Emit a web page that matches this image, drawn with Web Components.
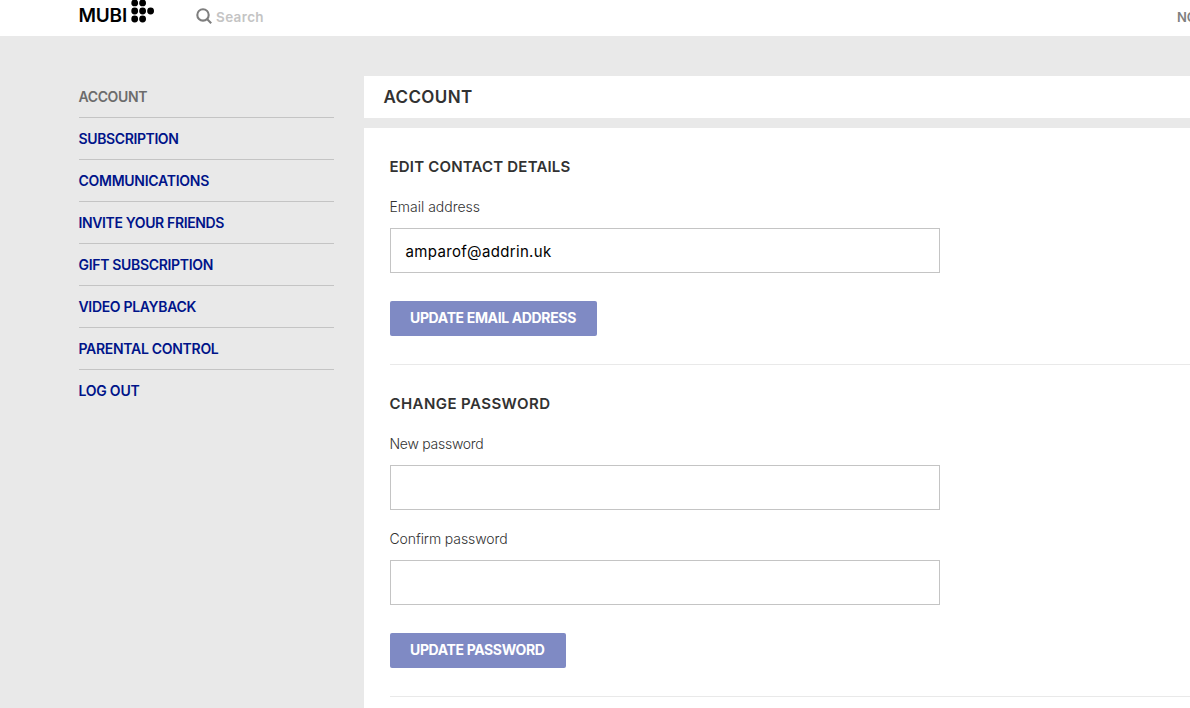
<!DOCTYPE html>
<html lang="en"><head><meta charset="utf-8"><title>MUBI – Account</title>
<style>
html,body{margin:0;height:100%;overflow:hidden;background:#e9e9e9;font-family:Inter,"Liberation Sans",sans-serif;color:#323232}
</style></head><body>
<mubi-page></mubi-page>
<script>
const define=(name,html,init)=>{
  const t=document.createElement('template');t.innerHTML=html;
  customElements.define(name,class extends HTMLElement{
    connectedCallback(){
      if(this.shadowRoot)return;
      this.attachShadow({mode:'open'}).appendChild(t.content.cloneNode(true));
      if(init)init(this,this.shadowRoot);
    }
  });
};
/* Text tracked out or in to a given advance width */
define('tracked-text','<style>:host{display:inline-block;white-space:nowrap;margin-left:-.5px}</style><slot></slot>',h=>{
  const target=parseFloat(h.getAttribute('width'))-.5;
  const n=h.textContent.length;
  const w=h.getBoundingClientRect().width;
  if(target&&w)h.style.letterSpacing=((target-w)/n).toFixed(3)+'px';
});
define('mubi-logo',`<style>:host{display:flex;width:76px;height:36px;color:#000}
 .word{font-size:19px;line-height:23px;font-weight:600;padding-top:4px;width:52px}svg{display:block;flex:none}</style>
 <div class="word"><tracked-text width="49">MUBI</tracked-text></div>
 <svg width="24" height="24"><g><circle cx="3.7" cy="2.9" r="3.4"/><circle cx="11.6" cy="2.9" r="3.4"/><circle cx="3.7" cy="11" r="3.4"/><circle cx="11.6" cy="11" r="3.4"/><circle cx="19.6" cy="11" r="3.4"/><circle cx="3.7" cy="19" r="3.4"/><circle cx="11.6" cy="19" r="3.4"/></g></svg>`);
define('mubi-search',`<style>:host{display:flex;margin-left:41px;height:36px;font:600 13.5px/18px Inter,sans-serif;color:#c4c4c4}
 svg{margin-top:8px;flex:none}span{padding:8px 0 0 4.5px}</style>
 <svg width="16" height="16" fill="none" stroke="#7e7e7e" stroke-width="2.1"><circle cx="7" cy="6.9" r="5.7"/><path d="M11 11 15.2 15.2"/></svg>
 <span><tracked-text width="48.5">Search</tracked-text></span>`);
define('mubi-header',`<style>:host{display:flex;height:36px;background:#fff;padding-left:79px;overflow:hidden;box-sizing:border-box}
 .nav{margin-left:auto;width:13px;flex:none;overflow:hidden;white-space:nowrap;font:600 13px/18px Inter,sans-serif;color:#808080;padding-top:8px}</style>
 <mubi-logo></mubi-logo><mubi-search></mubi-search><div class="nav">NO</div>`);
define('side-link',`<style>:host{display:block;height:41px;border-bottom:1px solid #c4c4c4;font-size:14px;line-height:41px;font-weight:560;color:#001489}
 :host([active]){color:#6c6c6c}:host(:last-of-type){border:0}</style><slot></slot>`);
define('side-nav',`<style>:host{display:block;width:255px;flex:none}</style>
 <side-link active><tracked-text width="69">ACCOUNT</tracked-text></side-link>
 <side-link><tracked-text width="100.5">SUBSCRIPTION</tracked-text></side-link>
 <side-link><tracked-text width="131">COMMUNICATIONS</tracked-text></side-link>
 <side-link><tracked-text width="146">INVITE YOUR FRIENDS</tracked-text></side-link>
 <side-link><tracked-text width="135">GIFT SUBSCRIPTION</tracked-text></side-link>
 <side-link><tracked-text width="118">VIDEO PLAYBACK</tracked-text></side-link>
 <side-link><tracked-text width="140.5">PARENTAL CONTROL</tracked-text></side-link>
 <side-link><tracked-text width="61.5">LOG OUT</tracked-text></side-link>`);
define('form-section',`<style>:host{display:block;padding-top:28px;border-bottom:1px solid #e9e9e9}
 .h{font-size:15px;line-height:21px;height:21px;font-weight:600;margin-bottom:20px}</style>
 <div class="h"><slot name="title"></slot></div><slot></slot>`);
define('form-field',`<style>:host{display:block}:host(:not(:first-of-type)){margin-top:19px}
 .l{font:350 14px/20px Inter,sans-serif;height:20px;margin-bottom:11px;color:#323232}
 .i{box-sizing:border-box;width:550px;height:45px;border:1px solid #c4c4c4;padding:1px 15px 0;font-size:15px;line-height:43px;color:#000;background:#fff}</style>
 <div class="l"><slot name="label"></slot></div><div class="i"><slot></slot></div>`);
define('form-button',`<style>:host{display:flex;width:207px;box-sizing:border-box;height:35px;margin:28px 0;padding:0 20.5px;background:#7f8ac4;border-radius:2px;color:#fff;font-size:14px;line-height:33px;font-weight:700}:host([compact]){width:176px}</style><slot></slot>`);
define('mubi-page',`<style>:host{display:block;height:708px;overflow:hidden}
 .cols{display:flex;gap:30px;padding:40px 0 0 79px}main{flex:1;min-width:0}
 .title{background:#fff;height:42px;box-sizing:border-box;padding-left:20px;font-size:17px;line-height:42px;font-weight:600}
 .body{background:#fff;margin-top:10px;min-height:700px;padding-left:26px}</style>
 <mubi-header></mubi-header>
 <div class="cols"><side-nav></side-nav><main>
 <div class="title"><tracked-text width="89.5">ACCOUNT</tracked-text></div>
 <div class="body">
 <form-section><tracked-text slot="title" width="181.5">EDIT CONTACT DETAILS</tracked-text>
  <form-field><tracked-text slot="label" width="91">Email address</tracked-text><tracked-text width="146.5">amparof@addrin.uk</tracked-text></form-field>
  <form-button><tracked-text width="166.5">UPDATE EMAIL ADDRESS</tracked-text></form-button></form-section>
 <form-section><tracked-text slot="title" width="161.5">CHANGE PASSWORD</tracked-text>
  <form-field><tracked-text slot="label" width="94.5">New password</tracked-text></form-field>
  <form-field><tracked-text slot="label" width="118.5">Confirm password</tracked-text></form-field>
  <form-button compact><tracked-text width="135">UPDATE PASSWORD</tracked-text></form-button></form-section>
 </div></main></div>`);
</script></body></html>
